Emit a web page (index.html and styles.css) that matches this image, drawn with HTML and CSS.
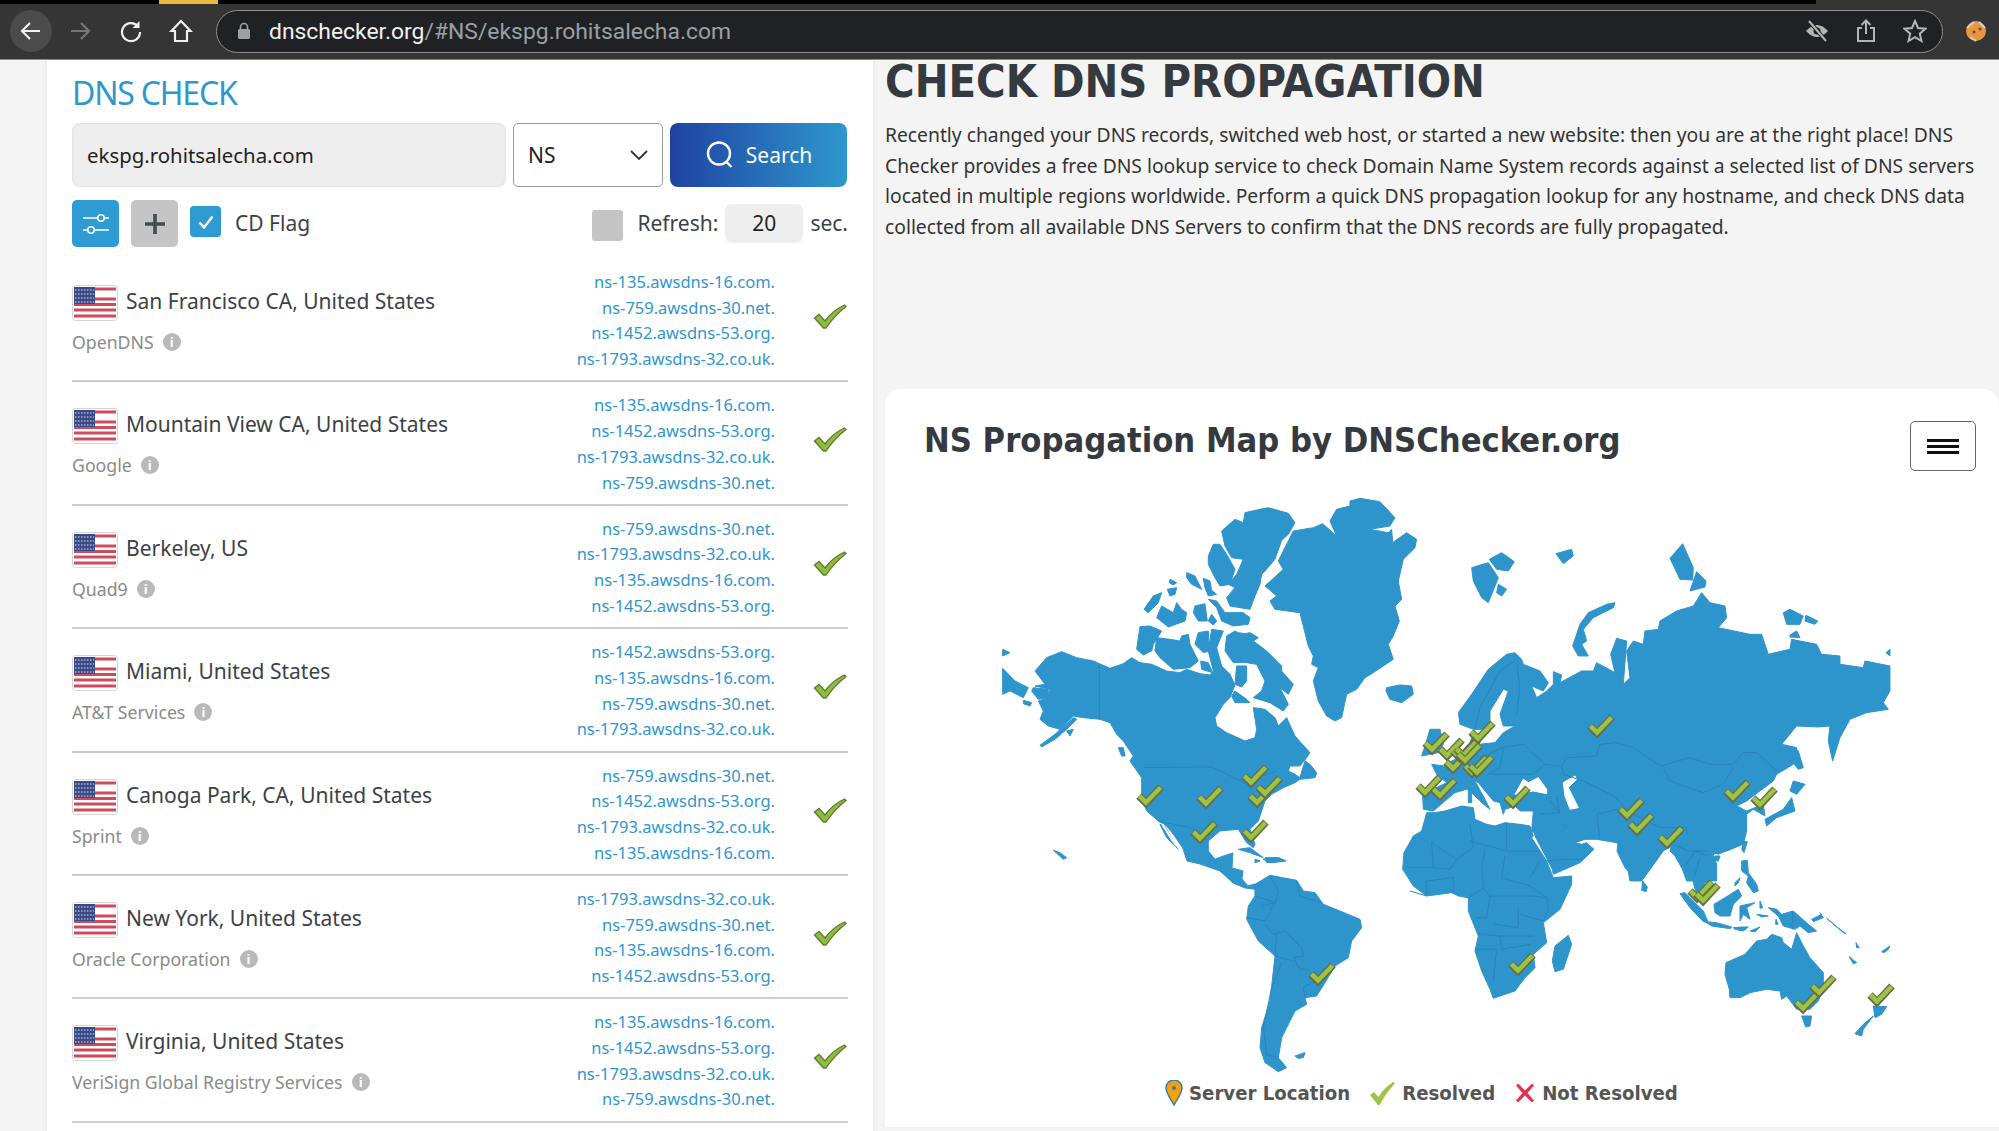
FILE: index.html
```html
<!DOCTYPE html>
<html>
<head>
    <title>DNS Checker</title>
    <link rel="stylesheet" href="styles.css">
</head>
<body>
    <svg class="defs" width="0" height="0">
        <defs>
            <g id="tick">
                <polyline points="3,13 10,20 25,4" fill="none" stroke="#666b4c" stroke-width="7.5"/>
                <polyline points="3.5,13 10,19.5 24.5,4.5" fill="none" stroke="#9cc342" stroke-width="4.6"/>
            </g>
            <symbol id="flag" viewBox="0 0 46 36">
                <rect x="0.5" y="0.5" width="45" height="35" rx="3" fill="#fff" stroke="#d5d5d5"/>
                <path d="M2 4h42M2 14h42M2 19.500h42M2 25h42M2 31h42" stroke="#cf4b5c" stroke-width="3"/>
                <rect x="2" y="2" width="21" height="17" fill="#3a4a86"/>
                <path d="M3 5h19M3 9h19M3 13h19M3 17h19" stroke="#a9b2d4" stroke-width="1.500" stroke-dasharray="1.500 1.500"/>
            </symbol>
            <symbol id="row-tick" viewBox="0 0 34 25">
                <path d="M1.500 14 L6 10.500 L12 17 Q20 6 31.500 1 L33 2.500 Q22 11 13 24 L10.500 24 Z" fill="#8fbc3c" stroke="#5f7a34" stroke-width="1.300"/>
            </symbol>
        </defs>
    </svg>

    <div class="tab-strip"><span class="tabs-black"><span class="active-tab"></span></span></div>
    <header class="toolbar">
        <span class="nav-btn nav-back">
            <svg width="26" height="26" viewBox="0 0 26 26"><path d="M22 13H5M12 5l-8 8 8 8" fill="none" stroke="#f1f1f1" stroke-width="2.200"/></svg>
        </span>
        <span class="nav-btn">
            <svg width="26" height="26" viewBox="0 0 26 26"><path d="M3 13h18M13 5l8 8-8 8" fill="none" stroke="#777" stroke-width="2.200"/></svg>
        </span>
        <span class="nav-btn">
            <svg width="26" height="26" viewBox="0 0 26 26"><path d="M20 8.500A9 9 0 1 0 22 14" fill="none" stroke="#f1f1f1" stroke-width="2.200"/><path d="M21.500 3v7h-7z" fill="#f1f1f1"/></svg>
        </span>
        <span class="nav-btn">
            <svg width="26" height="26" viewBox="0 0 26 26"><path d="M13 3 3.500 13H7v10h12V13h3.500z" fill="none" stroke="#f1f1f1" stroke-width="2.200"/></svg>
        </span>
        <div class="address">
            <svg class="lock" width="14" height="18" viewBox="0 0 14 18"><path d="M3.500 8V5a3.500 3.500 0 0 1 7 0v3" fill="none" stroke="#9aa0a6" stroke-width="1.600"/><rect x="1" y="7" width="12" height="10" rx="1.500" fill="#9aa0a6"/></svg>
            <span class="url"><b>dnschecker.org</b>/#NS/ekspg.rohitsalecha.com</span>
            <span class="addr-icons">
                <svg width="24" height="24" viewBox="0 0 24 24"><path d="M1 12q11-12 22 0q-11 12-22 0z" fill="#b5b5b5"/><circle cx="12" cy="12" r="3.500" fill="#202124"/><path d="M4 2l17 20" stroke="#202124" stroke-width="4"/><path d="M4 2l17 20" stroke="#b5b5b5" stroke-width="2"/></svg>
                <svg width="20" height="24" viewBox="0 0 20 24"><path d="M6 9H2v13h16V9h-4M10 15V2M5.500 6 10 1.500 14.500 6" fill="none" stroke="#b5b5b5" stroke-width="2"/></svg>
                <svg width="24" height="24" viewBox="0 0 24 24"><path d="m12 2 3 7 7.500.7-5.700 5 1.700 7.300-6.500-3.800L5.500 22l1.700-7.300-5.700-5L9 9z" fill="none" stroke="#b5b5b5" stroke-width="2"/></svg>
            </span>
        </div>
        <svg class="avatar" width="22" height="22" viewBox="0 0 22 22"><circle cx="11" cy="11" r="10" fill="#e9963c"/><path d="M2 8 9 2M14 2l6 6M5 17l6 4" stroke="#cfcfcf" stroke-width="2"/><circle cx="9" cy="12" r="1.500" fill="#6b4a2a"/><circle cx="15" cy="9" r="1.500" fill="#6b4a2a"/></svg>
    </header>

    <main class="page">
        <section class="check-card">
            <h2 class="check-title">DNS CHECK</h2>
            <div class="search-row">
                <div class="host-input">ekspg.rohitsalecha.com</div>
                <div class="type-select">NS
                    <svg width="20" height="12" viewBox="0 0 20 12"><path d="M2 2l8 8 8-8" fill="none" stroke="#333" stroke-width="1.800"/></svg>
                </div>
                <button class="search-btn">
                    <svg width="30" height="30" viewBox="0 0 30 30"><circle cx="14" cy="13.500" r="11" fill="none" stroke="#fff" stroke-width="2.400"/><path d="m21.500 22 5 5" stroke="#fff" stroke-width="2.400"/></svg>
                    Search
                </button>
            </div>
            <div class="options-row">
                <span class="square-btn blue-btn">
                    <svg width="30" height="26" viewBox="0 0 30 26"><path d="M2 7h15M23 7h5M2 19h5M13 19h15" stroke="#fff" stroke-width="1.500"/><circle cx="20" cy="7" r="3.200" fill="none" stroke="#fff" stroke-width="1.500"/><circle cx="10" cy="19" r="3.200" fill="none" stroke="#fff" stroke-width="1.500"/></svg>
                </span>
                <span class="square-btn grey-btn">
                    <svg width="22" height="22" viewBox="0 0 22 22"><path d="M11 1v20M1 11h20" stroke="#444b52" stroke-width="3.600"/></svg>
                </span>
                <span class="checkbox">
                    <svg width="20" height="20" viewBox="0 0 20 20"><path d="m3.500 10.500 4.500 5 8.500-11" fill="none" stroke="#fff" stroke-width="2.400"/></svg>
                </span>
                <span class="cd-label">CD Flag</span>
                <span class="refresh-box"></span>
                <span class="refresh-label">Refresh:</span>
                <span class="refresh-input">20</span>
                <span class="sec-label">sec.</span>
            </div>

            <div class="result">
                <div class="place">
                    <div class="place-name"><svg class="flag"><use href="#flag"/></svg>San Francisco CA, United States</div>
                    <div class="provider">OpenDNS <span class="info">i</span></div>
                </div>
                <div class="ns-list">
                    <div>ns-135.awsdns-16.com.</div>
                    <div>ns-759.awsdns-30.net.</div>
                    <div>ns-1452.awsdns-53.org.</div>
                    <div>ns-1793.awsdns-32.co.uk.</div>
                </div>
                <svg class="status"><use href="#row-tick"/></svg>
            </div>
            <div class="result">
                <div class="place">
                    <div class="place-name"><svg class="flag"><use href="#flag"/></svg>Mountain View CA, United States</div>
                    <div class="provider">Google <span class="info">i</span></div>
                </div>
                <div class="ns-list">
                    <div>ns-135.awsdns-16.com.</div>
                    <div>ns-1452.awsdns-53.org.</div>
                    <div>ns-1793.awsdns-32.co.uk.</div>
                    <div>ns-759.awsdns-30.net.</div>
                </div>
                <svg class="status"><use href="#row-tick"/></svg>
            </div>
            <div class="result">
                <div class="place">
                    <div class="place-name"><svg class="flag"><use href="#flag"/></svg>Berkeley, US</div>
                    <div class="provider">Quad9 <span class="info">i</span></div>
                </div>
                <div class="ns-list">
                    <div>ns-759.awsdns-30.net.</div>
                    <div>ns-1793.awsdns-32.co.uk.</div>
                    <div>ns-135.awsdns-16.com.</div>
                    <div>ns-1452.awsdns-53.org.</div>
                </div>
                <svg class="status"><use href="#row-tick"/></svg>
            </div>
            <div class="result">
                <div class="place">
                    <div class="place-name"><svg class="flag"><use href="#flag"/></svg>Miami, United States</div>
                    <div class="provider">AT&amp;T Services <span class="info">i</span></div>
                </div>
                <div class="ns-list">
                    <div>ns-1452.awsdns-53.org.</div>
                    <div>ns-135.awsdns-16.com.</div>
                    <div>ns-759.awsdns-30.net.</div>
                    <div>ns-1793.awsdns-32.co.uk.</div>
                </div>
                <svg class="status"><use href="#row-tick"/></svg>
            </div>
            <div class="result">
                <div class="place">
                    <div class="place-name"><svg class="flag"><use href="#flag"/></svg>Canoga Park, CA, United States</div>
                    <div class="provider">Sprint <span class="info">i</span></div>
                </div>
                <div class="ns-list">
                    <div>ns-759.awsdns-30.net.</div>
                    <div>ns-1452.awsdns-53.org.</div>
                    <div>ns-1793.awsdns-32.co.uk.</div>
                    <div>ns-135.awsdns-16.com.</div>
                </div>
                <svg class="status"><use href="#row-tick"/></svg>
            </div>
            <div class="result">
                <div class="place">
                    <div class="place-name"><svg class="flag"><use href="#flag"/></svg>New York, United States</div>
                    <div class="provider">Oracle Corporation <span class="info">i</span></div>
                </div>
                <div class="ns-list">
                    <div>ns-1793.awsdns-32.co.uk.</div>
                    <div>ns-759.awsdns-30.net.</div>
                    <div>ns-135.awsdns-16.com.</div>
                    <div>ns-1452.awsdns-53.org.</div>
                </div>
                <svg class="status"><use href="#row-tick"/></svg>
            </div>
            <div class="result">
                <div class="place">
                    <div class="place-name"><svg class="flag"><use href="#flag"/></svg>Virginia, United States</div>
                    <div class="provider">VeriSign Global Registry Services <span class="info">i</span></div>
                </div>
                <div class="ns-list">
                    <div>ns-135.awsdns-16.com.</div>
                    <div>ns-1452.awsdns-53.org.</div>
                    <div>ns-1793.awsdns-32.co.uk.</div>
                    <div>ns-759.awsdns-30.net.</div>
                </div>
                <svg class="status"><use href="#row-tick"/></svg>
            </div>
        </section>

        <section class="info-col">
            <h1 class="main-title">CHECK DNS PROPAGATION</h1>
            <p class="intro">Recently changed your DNS records, switched web host, or started a new website: then you are at the right place! DNS Checker provides a free DNS lookup service to check Domain Name System records against a selected list of DNS servers located in multiple regions worldwide. Perform a quick DNS propagation lookup for any hostname, and check DNS data collected from all available DNS Servers to confirm that the DNS records are fully propagated.</p>

            <div class="map-card">
                <div class="map-head">
                    <h2 class="map-title">NS Propagation Map by DNSChecker.org</h2>
                    <span class="menu-btn"><i></i><i></i><i></i></span>
                </div>
                <svg class="world" width="900" height="590" viewBox="1000 490 900 590">
                    <!-- north america, traced in 3x crop coords -->
                    <g class="land" transform="translate(960 480) scale(.3333)">
                        <path d="M785 150 825 115 850 125 855 95 900 85 925 80 985 97 1005 125 985 160 965 178 945 235 915 270 905 280 900 310 885 345 870 385 810 375 800 350 825 320 805 310 830 280 850 235 815 230 795 195z"/>
                        <path d="M760 190 780 190 800 220 825 265 810 310 780 315 765 290 745 250 745 225z"/>
                        <path d="M1170 60 1200 52 1260 62 1305 110 1290 135 1230 145 1285 155 1295 145 1298 185 1340 155 1370 175 1365 200 1330 235 1315 300 1325 355 1305 375 1318 420 1300 465 1285 490 1300 535 1240 575 1215 590 1190 625 1160 640 1145 710 1125 720 1100 705 1075 660 1060 600 1075 560 1055 550 1060 525 1045 495 1020 395 945 385 930 360 950 345 915 315 970 265 955 240 1000 150 1060 140 1088 128 1130 165 1110 120 1130 85 1170 75z"/>
                        <path d="M1280 620 1320 612 1355 615 1360 640 1325 665 1290 655 1278 630z"/>
                        <path d="M680 275 705 285 725 325 695 310 680 290z"/>
                        <path d="M730 292 750 300 755 328 770 340 745 345 735 320z"/>
                        <path d="M630 295 650 305 640 312 628 305z"/>
                        <path d="M622 325 650 320 645 340 630 345z"/>
                        <path d="M580 345 605 335 595 365 565 395 552 385z"/>
                        <path d="M605 375 640 395 650 365 665 385 680 395 675 420 625 438 590 410z"/>
                        <path d="M705 375 735 368 742 420 715 420 700 395z"/>
                        <path d="M745 355 770 360 795 395 850 395 870 410 865 430 820 435 785 420 770 380z"/>
                        <path d="M755 400 770 420 760 432 745 420z"/>
                        <path d="M540 437 570 435 605 450 580 490 575 510 550 522 530 505z"/>
                        <path d="M590 470 630 475 660 480 665 465 685 460 690 490 715 540 690 560 640 565 600 530 585 510z"/>
                        <path d="M715 455 745 450 748 510 730 515 705 490z"/>
                        <path d="M755 445 790 450 770 500 785 555 810 580 800 600 760 570 745 510z"/>
                        <path d="M800 465 825 450 835 455 855 458 870 455 895 470 880 480 920 510 965 555 965 570 1000 610 985 640 960 620 985 670 970 690 930 665 880 650 905 630 915 600 890 550 860 545 820 545 795 510z"/>
                        <path d="M830 555 860 555 860 600 845 618 825 610z"/>
                        <path d="M722 540 745 545 758 575 725 565z"/>
                        <path d="M825 630 860 655 870 665 825 665 815 645z"/>
                        <path d="M305 512 350 530 400 540 450 562 490 548 515 530 540 545 575 550 620 570 660 575 680 565 720 578 750 582 770 560 810 580 825 612 810 650 790 670 765 710 770 735 800 755 855 780 885 770 890 745 880 680 915 685 945 710 955 735 980 710 1005 765 1050 815 1040 830 1020 855 990 855 985 870 1005 880 1020 890 1035 840 1050 850 1070 875 1065 890 1020 895 1005 905 970 920 935 940 915 960 905 990 895 1020 870 1045 885 1090 880 1100 860 1085 835 1045 780 1050 745 1080 745 1110 765 1135 790 1125 819 1116 816 1161 849 1170 846 1194 864 1215 885 1209 885 1225 855 1221 819 1206 780 1170 720 1149 681 1140 668 1100 640 1060 620 1035 595 1020 560 990 545 950 545 890 510 840 520 825 490 780 470 760 450 725 420 715 370 710 340 705 300 745 265 735 240 715 250 690 235 660 265 650 270 625 225 615 255 610 225 570 260 530z"/>
                        <path d="M340 710 350 715 320 745 285 775 245 798 240 793 285 760z"/>
                        <path d="M320 750 340 745 330 765z"/>
                        <path d="M220 620 265 625 265 650 235 655 215 630z"/>
                        <path d="M128 562 165 600 205 620 190 650 150 630 128 640z"/>
                        <path d="M128 505 150 515 128 525z"/>
                        <path d="M190 658 215 665 210 675 190 668z"/>
                        <path d="M475 800 490 800 495 825 485 825z"/>
                        <path d="M835 1105 870 1100 910 1130 870 1115z"/>
                        <path d="M915 1130 955 1130 975 1140 920 1145z"/>
                        <path d="M280 1108 300 1115 320 1130 310 1135z"/>
                        <path d="M615 1035 650 1100 655 1105 620 1070 600 1030z" />
                        <path class="sea" d="M610 1030 648 1095 635 1078 605 1030z"/>
                        <polyline class="border" points="418,550 418,715"/>
                        <polyline class="border" points="550,860 755,858 855,905 950,870"/>
                        <polyline class="border" points="595,1020 640,1030 690,1040 745,1080"/>
                    </g>
                    <!-- eurasia -->
                    <g class="land" transform="translate(1400 480) scale(.3333)">
                        <path d="M215 260 265 245 295 290 265 365 245 350 220 300z"/>
                        <path d="M268 235 305 215 343 242 325 270 290 265z"/>
                        <path d="M295 310 320 325 305 345 290 335z"/>
                        <path d="M468 218 515 205 520 225 490 248z"/>
                        <path d="M645 365 640 380 580 410 550 445 560 480 545 490 565 525 535 525 518 495 540 430 565 395 620 370z"/>
                        <path d="M848 188 880 260 878 297 840 295 810 232z"/>
                        <path d="M890 272 918 300 915 318 870 330z"/>
                        <path d="M1150 395 1170 385 1210 405 1200 430 1160 430z"/>
                        <path d="M1218 403 1253 420 1245 430 1215 420z"/>
                        <path d="M1170 462 1190 450 1200 470 1170 468z"/>
                        <path d="M1458 515 1470 505 1470 525z"/>
                        <path d="M175 695 215 640 265 565 320 520 345 515 365 535 370 550 420 570 445 605 430 630 395 615 410 650 440 630 460 610 460 572 485 582 480 605 545 570 580 570 590 545 645 575 632 520 650 472 680 480 670 610 690 590 680 510 700 480 730 490 735 450 775 445 780 420 830 390 880 375 905 335 930 365 975 375 980 410 955 440 1050 460 1085 460 1105 520 1170 505 1175 475 1250 490 1265 520 1320 525 1320 550 1390 560 1395 540 1470 555 1470 630 1450 665 1465 685 1400 695 1350 715 1320 770 1298 840 1285 780 1290 735 1255 738 1190 735 1145 790 1190 800 1180 850 1130 880 1120 900 1040 960 1010 975 1040 990 1090 970 1095 1005 1060 985 1040 1000 1040 1050 1030 1090 980 1110 940 1120 950 1150 950 1200 860 1200 820 1090 790 1110 740 1180 725 1200 690 1200 675 1120 650 1085 590 1075 555 1075 525 1085 497 1045 430 1075 395 1050 400 990 385 990 360 990 345 975 315 985 310 1000 300 965 280 960 235 905 225 900 255 955 270 985 245 965 210 930 200 925 165 935 135 960 100 990 70 985 68 945 100 925 140 905 110 880 95 850 130 855 155 840 190 825 205 800 215 770 240 770 238 790 285 785 310 755 345 735 310 735 300 700 325 630 310 625 270 690 270 720 250 745 220 745 180 730z"/>
                        <path d="M90 745 120 745 130 790 115 815 65 825 75 795z"/>
                        <path d="M205 920 215 925 215 965 205 965z"/>
                        <path d="M1185 800 1195 810 1210 860 1195 865 1183 850z"/>
                        <path d="M1180 900 1215 910 1190 940 1170 930z"/>
                        <path d="M1175 950 1185 990 1130 1010 1100 1035 1095 1015 1150 985z"/>
                        <path class="sea" d="M490 905 525 885 530 895 505 920 535 980 510 985 495 945z"/>
                        <path class="sea" d="M370 895 385 905 415 890 440 925 440 938 400 930 345 940z"/>
                        <polyline class="border" points="435,850 485,855 500,830 590,825 600,790 650,785 700,800 780,855 870,830 930,850 1000,850 1030,815 1070,815 1130,870"/>
                        <polyline class="border" points="790,860 810,900 910,935 970,910 1000,860"/>
                        <polyline class="border" points="485,855 490,880 550,900 640,945 700,1000 780,1040 860,1040 865,1100"/>
                        <polyline class="border" points="470,945 480,1000 497,1045"/>
                        <polyline class="border" points="590,1000 600,1075"/>
                        <polyline class="border" points="590,1000 650,985 700,1000"/>
                        <polyline class="border" points="345,540 300,570 240,680 225,745"/>
                        <polyline class="border" points="350,545 360,620 350,700"/>
                        <polyline class="border" points="300,800 370,790 435,850 400,880 340,880 265,880"/>
                        <polyline class="border" points="240,830 310,800 300,860 265,880"/>
                    </g>
                    <!-- south america -->
                    <g class="land" transform="translate(1200 840) scale(.3333)">
                        <path d="M165 130 210 103 290 118 310 150 345 155 370 190 420 210 480 235 485 260 455 300 445 350 405 375 375 425 350 465 315 470 320 490 285 510 270 540 245 590 235 650 260 680 235 692 195 665 180 620 185 560 210 480 225 345 175 300 140 235 145 195 165 165z"/>
                        <path d="M285 645 315 635 310 650 295 652z"/>
                        <path d="M165 55 180 60 165 65z"/>
                        <path d="M190 55 235 50 258 60 215 65z"/>
                        <polyline class="border" points="165,165 225,185 195,240 140,230"/>
                        <polyline class="border" points="185,195 225,185 235,150 210,105"/>
                        <polyline class="border" points="290,120 300,165 360,185"/>
                        <polyline class="border" points="195,250 220,280 255,270 305,320 310,345 280,350 300,385 325,385"/>
                        <polyline class="border" points="230,280 225,345 280,360"/>
                        <polyline class="border" points="245,365 215,440 190,560 200,640 235,650"/>
                        <polyline class="border" points="310,440 345,420"/>
                        <polyline class="border" points="310,440 315,470"/>
                    </g>
                    <!-- africa, arabia -->
                    <g class="land" transform="translate(1390 780) scale(.3333)">
                        <path d="M110 95 135 95 165 90 215 75 250 80 255 115 290 130 315 135 345 125 390 130 420 135 430 165 425 170 470 240 490 290 545 285 545 310 510 385 460 425 470 485 430 520 435 560 405 590 375 630 310 652 300 625 275 570 255 510 265 465 235 390 235 350 205 345 185 335 110 345 70 315 38 265 42 215 70 165 95 150z"/>
                        <path d="M535 463 545 490 520 565 495 572 487 540 495 495z"/>
                        <path d="M435 165 487 265 490 280 570 245 612 205 590 185 575 190 555 185 525 145 510 95 450 100 430 125z"/>
                        <polyline class="border" points="125,185 200,235 250,200 240,130"/>
                        <polyline class="border" points="240,180 350,210 350,125"/>
                        <polyline class="border" points="355,210 450,210"/>
                        <polyline class="border" points="125,185 130,260 50,260"/>
                        <polyline class="border" points="200,235 180,265 130,260"/>
                        <polyline class="border" points="285,205 275,260 280,320 235,350"/>
                        <polyline class="border" points="345,225 335,290 420,315 470,350 425,345 300,345 280,320"/>
                        <polyline class="border" points="420,290 450,240"/>
                        <polyline class="border" points="300,345 290,410 260,410"/>
                        <polyline class="border" points="310,430 385,440 385,380"/>
                        <polyline class="border" points="470,350 475,385 460,420 390,400"/>
                        <polyline class="border" points="265,460 330,465 430,465"/>
                        <polyline class="border" points="255,505 320,505 310,600"/>
                        <polyline class="border" points="330,465 335,505 420,490"/>
                        <polyline class="border" points="60,330 110,345 110,300 190,290 190,335"/>
                        <polyline class="border" points="450,100 510,95 480,60"/>
                        <polyline class="border" points="470,240 530,235 580,235"/>
                    </g>
                    <!-- south east asia, oceania -->
                    <g class="land" transform="translate(1640 800) scale(.3333)">
                        <path d="M95 130 130 100 300 130 235 160 210 150 205 165 225 205 225 235 195 245 180 215 155 225 140 190 135 195 125 200 105 165 90 150z"/>
                        <path d="M155 225 165 265 180 290 200 280 200 260 185 225z"/>
                        <path d="M225 165 240 165 235 180 222 178z"/>
                        <path d="M-69 150-45 200-12 234 0 205 20 175 60 150 90 140 90 100-60 90z"/>
                        <path d="M8 240 22 258 18 272 5 268z"/>
                        <path d="M120 278 135 275 190 330 205 365 190 362 150 320z"/>
                        <path d="M195 362 230 365 275 378 270 383 215 375z"/>
                        <path d="M222 310 255 290 295 265 305 285 280 310 270 345 240 345 225 335z"/>
                        <path d="M300 315 345 305 320 320 330 355 310 340 300 360z"/>
                        <path d="M305 180 322 178 325 215 350 250 355 270 340 275 320 245 325 225 305 210z"/>
                        <path d="M312 122 322 122 312 155 305 145z"/>
                        <path d="M285 245 300 230 295 245 285 255z"/>
                        <path d="M385 320 410 325 425 340 460 330 505 370 530 390 505 395 480 375 465 385 430 375 415 345z"/>
                        <path d="M515 355 545 340 540 335 550 350 520 362z"/>
                        <path d="M560 352 610 395 618 398 600 385z"/>
                        <path d="M648 425 658 440 650 440z"/>
                        <path d="M725 452 750 435 745 445 732 455z"/>
                        <path d="M628 467 650 485 640 488z"/>
                        <path d="M280 380 305 378 325 378 310 390 285 385z"/>
                        <path d="M330 390 360 378 345 392z"/>
                        <path d="M350 340 385 345 365 348z"/>
                        <path d="M360 300 368 320 360 322z"/>
                        <path d="M408 355 414 370 407 370z"/>
                        <path d="M258 485 315 460 350 420 380 415 395 400 425 410 430 425 455 445 470 395 490 435 510 470 550 515 550 560 535 600 510 625 470 625 440 585 425 595 420 570 380 565 330 575 300 590 270 590 268 565 255 520z"/>
                        <path d="M485 645 515 645 510 675 497 678z"/>
                        <path d="M700 615 740 617 725 640 705 650z"/>
                        <path d="M700 645 670 685 665 705 645 698 670 670z"/>
                        <polyline class="border" points="100,130 145,150 205,150"/>
                        <polyline class="border" points="140,190 165,150 205,165"/>
                        <polyline class="border" points="165,220 180,170"/>
                        <polyline class="border" points="458,333 458,385"/>
                    </g>
                    <use href="#tick" x="1136" y="782"/><use href="#tick" x="1196" y="783"/><use href="#tick" x="1241" y="762"/>
                    <use href="#tick" x="1247" y="782"/><use href="#tick" x="1255" y="773"/><use href="#tick" x="1190" y="818"/>
                    <use href="#tick" x="1241" y="817"/><use href="#tick" x="1422" y="729"/><use href="#tick" x="1437" y="735"/>
                    <use href="#tick" x="1443" y="748"/><use href="#tick" x="1450" y="737"/><use href="#tick" x="1453" y="735"/>
                    <use href="#tick" x="1468" y="718"/><use href="#tick" x="1455" y="740"/><use href="#tick" x="1462" y="752"/>
                    <use href="#tick" x="1467" y="752"/><use href="#tick" x="1415" y="772"/><use href="#tick" x="1430" y="775"/>
                    <use href="#tick" x="1503" y="783"/><use href="#tick" x="1587" y="712"/><use href="#tick" x="1617" y="795"/>
                    <use href="#tick" x="1627" y="810"/><use href="#tick" x="1657" y="823"/><use href="#tick" x="1723" y="777"/>
                    <use href="#tick" x="1750" y="784"/><use href="#tick" x="1687" y="877"/><use href="#tick" x="1693" y="880"/>
                    <use href="#tick" x="1793" y="988"/><use href="#tick" x="1809" y="972"/><use href="#tick" x="1867" y="981"/>
                    <use href="#tick" x="1308" y="960"/><use href="#tick" x="1508" y="950"/>
                </svg>
                <div class="legend">
                    <svg width="18" height="26" viewBox="0 0 18 26"><path d="M9 25C5 18 1 13 1 8a8 8 0 0 1 16 0c0 5-4 10-8 17z" fill="#f7a10a" stroke="#2f7ea8" stroke-width="1.400"/><circle cx="9" cy="8" r="2" fill="#2f7ea8"/></svg>
                    <span class="legend-text">Server Location</span>
                    <svg class="legend-gap" width="27" height="23" viewBox="0 0 27 23"><path d="M1 13l4-3 4.500 5Q15 6 24 0l2 1Q17 11 10.500 23H9z" fill="#9cc342"/></svg>
                    <span class="legend-text">Resolved</span>
                    <svg class="legend-gap" width="22" height="22" viewBox="0 0 22 22"><path d="M2 3.500 4 1.500l7 7 7-7 2 2-6.500 7.500 6.500 7.500-2 2-7-7-7 7-2-2L8.500 11z" fill="#e2354b"/></svg>
                    <span class="legend-text">Not Resolved</span>
                </div>
            </div>
        </section>
    </main>
</body>
</html>
```

FILE: styles.css
```css
html, body {
    margin: 0;
    height: 1131px;
    overflow: hidden;
}
body {
    background-color: #f4f4f4;
    font-family: "Noto Sans", sans-serif;
    color: #3b4148;
}
.defs {
    display: block;
    height: 0;
}

/* browser chrome */
.tab-strip {
    height: 4px;
    background-color: #353535;
}
.tabs-black {
    display: block;
    width: 1816px;
    height: 4px;
    background-color: #000;
    padding-left: 159px;
    box-sizing: border-box;
}
.active-tab {
    display: block;
    width: 59px;
    height: 4px;
    background-color: #e8b93c;
}
.toolbar {
    height: 56px;
    box-sizing: border-box;
    background-color: #353535;
    border-bottom: 1px solid #8b8b8b;
    display: flex;
    align-items: center;
    padding: 0 0 1px 10px;
}
.nav-btn {
    width: 42px;
    height: 42px;
    margin-right: 8px;
    border-radius: 50%;
    display: flex;
    align-items: center;
    justify-content: center;
}
.nav-back {
    background-color: #4b4b4b;
}
.address {
    margin-left: 6px;
    width: 1727px;
    height: 43px;
    box-sizing: border-box;
    border: 1.500px solid #8e8e8e;
    border-radius: 22px;
    background-color: #202124;
    display: flex;
    align-items: center;
    padding: 0 15px 0 20px;
}
.url {
    margin-left: 18px;
    font-family: Roboto, sans-serif;
    font-size: 22.900px;
    line-height: 24px;
    padding-top: 2px;
    color: #9aa0a6;
}
.url b {
    font-weight: 400;
    color: #f1f1f1;
}
.addr-icons {
    margin-left: auto;
    display: flex;
    gap: 27px;
}
.avatar {
    margin-left: 22px;
}

/* layout */
.page {
    display: flex;
    height: 1071px;
}
.check-card {
    width: 826px;
    box-sizing: border-box;
    margin-left: 47px;
    padding: 0 25px;
    background-color: #fff;
    box-shadow: 0 0 4px rgba(0, 0, 0, .08);
}
.info-col {
    margin-left: 12px;
    flex: 1;
}

/* check form */
.check-title {
    margin: 11px 0 0;
    font-size: 32px;
    line-height: 44px;
    font-weight: 400;
    color: #2f96ce;
    letter-spacing: -1.200px;
}
.search-row {
    display: flex;
    gap: 7px;
    margin-top: 8px;
    height: 64px;
}
.host-input {
    width: 434px;
    box-sizing: border-box;
    background-color: #eee;
    border-radius: 8px;
    box-shadow: inset 0 0 3px rgba(0, 0, 0, .1);
    padding-left: 15px;
    font-size: 20.400px;
    line-height: 64px;
    color: #1f1f1f;
}
.type-select {
    width: 150px;
    box-sizing: border-box;
    border: 1.500px solid #999;
    border-radius: 5px;
    padding: 0 13px 0 14px;
    font-size: 21px;
    display: flex;
    align-items: center;
    justify-content: space-between;
    color: #222;
}
.search-btn {
    width: 177px;
    border: 0;
    border-radius: 8px;
    background: linear-gradient(90deg, #1f42a2, #2e98cd);
    color: #fff;
    font-family: "Noto Sans", sans-serif;
    font-size: 21px;
    display: flex;
    align-items: center;
    justify-content: center;
    gap: 11px;
}
.options-row {
    display: flex;
    align-items: center;
    height: 47px;
    margin-top: 13px;
    font-size: 21px;
    line-height: 25px;
}
.square-btn {
    width: 47px;
    height: 47px;
    border-radius: 5px;
    display: flex;
    align-items: center;
    justify-content: center;
}
.blue-btn {
    background-color: #2f9bd3;
}
.grey-btn {
    margin-left: 12px;
    background-color: #c5c5c5;
}
.checkbox {
    width: 31px;
    height: 31px;
    margin: 0 0 4px 12px;
    border-radius: 4px;
    background-color: #2f9bd3;
    display: flex;
    align-items: center;
    justify-content: center;
}
.cd-label {
    margin-left: 14px;
}
.refresh-box {
    width: 31px;
    height: 31px;
    margin: 4px 0 0 auto;
    border-radius: 3px;
    background-color: #c5c5c5;
}
.refresh-label {
    margin-left: 14px;
}
.refresh-input {
    width: 78px;
    height: 39px;
    margin-left: 7px;
    border-radius: 7px;
    background-color: #eee;
    text-align: center;
    line-height: 39px;
    color: #1f1f1f;
}
.sec-label {
    margin-left: 7px;
}

/* result rows */
.result {
    height: 123.400px;
    box-sizing: border-box;
    border-bottom: 2px solid #ccc;
    display: flex;
    padding-top: 10px;
}
.options-row + .result {
    margin-top: 12px;
}
.place {
    flex: 1;
    padding-top: 16px;
}
.place-name {
    display: flex;
    height: 36px;
    font-size: 21px;
    line-height: 32px;
    color: #3b4148;
    white-space: nowrap;
}
.flag {
    width: 46px;
    height: 36px;
    margin-right: 8px;
}
.provider {
    margin-top: 8px;
    font-size: 17.700px;
    line-height: 26px;
    color: #8a8a8a;
    display: flex;
    align-items: center;
    gap: 9px;
    white-space: nowrap;
}
.info {
    width: 18px;
    height: 18px;
    border-radius: 50%;
    background-color: #b9b9b9;
    color: #fff;
    font-size: 13px;
    font-weight: 700;
    line-height: 18px;
    text-align: center;
}
.ns-list {
    text-align: right;
    font-size: 16.500px;
    line-height: 25.700px;
    color: #2f96ce;
    white-space: nowrap;
}
.status {
    width: 34px;
    height: 25px;
    margin: 35px 1px 0 38px;
}

/* right column */
.main-title {
    margin: 0;
    font-family: "DejaVu Sans Condensed", "DejaVu Sans", sans-serif;
    font-size: 44.900px;
    line-height: 44px;
    font-weight: 700;
    color: #343a40;
    white-space: nowrap;
}
.intro {
    margin: 16px 0 0;
    width: 1098px;
    font-size: 19.300px;
    line-height: 30.600px;
    color: #333;
}
.map-card {
    margin-top: 147px;
    height: 738px;
    background-color: #fff;
    border-radius: 16px 16px 0 0;
}
.map-head {
    height: 102px;
    box-sizing: border-box;
    display: flex;
    justify-content: space-between;
    padding: 32px 23px 0 39px;
}
.map-title {
    margin: 0;
    font-family: "DejaVu Sans Condensed", "DejaVu Sans", sans-serif;
    font-size: 34.200px;
    line-height: 38px;
    font-weight: 700;
    color: #343a40;
}
.menu-btn {
    width: 66px;
    height: 50px;
    box-sizing: border-box;
    border: 1.500px solid #666;
    border-radius: 5px;
    display: flex;
    flex-direction: column;
    align-items: center;
    justify-content: center;
    gap: 3px;
}
.menu-btn i {
    display: block;
    width: 32px;
    height: 3px;
    background-color: #111;
}
.world {
    display: block;
    margin-left: 115px;
}
.land path {
    fill: #2e94cc;
    stroke: #2e94cc;
    stroke-width: 3;
    stroke-linejoin: round;
}
.land .sea {
    fill: #fff;
    stroke: #fff;
}
.border {
    fill: none;
    stroke: #2a83bc;
    stroke-width: 3;
}
.legend {
    display: flex;
    align-items: center;
    height: 30px;
    margin: -3px 0 0 280px;
    font-family: "DejaVu Sans Condensed", "DejaVu Sans", sans-serif;
    font-size: 20.200px;
    font-weight: 700;
    color: #555;
}
.legend-text {
    margin-left: 6px;
}
.legend-gap {
    margin-left: 19px;
}
```
